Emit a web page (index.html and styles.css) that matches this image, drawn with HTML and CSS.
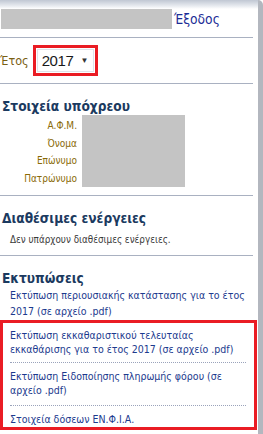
FILE: index.html
```html
<!DOCTYPE html>
<html lang="el">
<head>
    <meta charset="UTF-8">
    <meta name="viewport" content="width=device-width, initial-scale=1.0">
    <title>Στοιχεία υπόχρεου</title>
    <link rel="stylesheet" href="styles.css">
</head>
<body>
    <div class="panel">
        <div class="topbar">
            <div class="user-mask"></div>
            <a href="#" class="logout">Έξοδος</a>
        </div>
        <hr class="sep">
        <div class="year-row">
            <span class="year-label">Έτος</span>
            <div class="highlight year-box">
                <div class="select">2017<span class="arrow">&#9660;</span></div>
            </div>
        </div>
        <hr class="sep">

        <h2>Στοιχεία υπόχρεου</h2>
        <div class="owner">
            <div class="owner-labels">
                <div>Α.Φ.Μ.</div>
                <div>Όνομα</div>
                <div>Επώνυμο</div>
                <div>Πατρώνυμο</div>
            </div>
            <div class="owner-mask"></div>
        </div>
        <hr class="sep">

        <h2>Διαθέσιμες ενέργειες</h2>
        <p class="note">Δεν υπάρχουν διαθέσιμες ενέργειες.</p>
        <hr class="sep">

        <h2>Εκτυπώσεις</h2>
        <a href="#" class="print-link">Εκτύπωση περιουσιακής κατάστασης για το έτος 2017 (σε αρχείο .pdf)</a>
        <div class="highlight prints">
            <a href="#" class="print-link">Εκτύπωση εκκαθαριστικού τελευταίας εκκαθάρισης για το έτος 2017 (σε αρχείο .pdf)</a>
            <a href="#" class="print-link">Εκτύπωση Ειδοποίησης πληρωμής φόρου (σε αρχείο .pdf)</a>
            <a href="#" class="print-link">Στοιχεία δόσεων ΕΝ.Φ.Ι.Α.</a>
        </div>
    </div>
</body>
</html>
```

FILE: styles.css
```css
html, body {
    margin: 0;
    height: 100%;
    overflow: hidden;
}
body {
    font-family: "DejaVu Sans Condensed", "DejaVu Sans", sans-serif;
    background: #fff;
}
.panel {
    height: 100%;
    box-sizing: border-box;
    border-right: 5px solid #b3b7bf;
    border-top-right-radius: 5px;
    background: linear-gradient(to bottom, #c0c7d3 0px, #e8ebf0 6px, #fff 9px);
    padding-top: 9px;
}
.topbar {
    display: flex;
    align-items: center;
    height: 20px;
}
.user-mask {
    width: 171px;
    height: 20px;
    margin-left: 1px;
    background: #c4c4c4;
}
.logout {
    margin-left: 2px;
    font-size: 13.7px;
    color: #1c2c96;
    text-decoration: none;
}
.sep {
    margin: 0 5px 0 0;
    border: 0;
    border-top: 1px solid #a9b1c1;
}
.topbar + .sep {
    margin-top: 8px;
}
.year-row {
    display: flex;
    align-items: center;
    padding: 7px 0 7px;
}
.year-label {
    font-size: 12.5px;
    color: #7a6012;
}
.highlight {
    border: 3px solid #ea1c24;
}
.year-box {
    margin-left: 4px;
    padding: 1px;
}
.select {
    display: flex;
    align-items: center;
    height: 21px;
    padding: 0 5px 0 4px;
    border: 1px solid #dfe3ea;
    font-family: "Liberation Sans", Arial, sans-serif;
    font-size: 15px;
    letter-spacing: -0.4px;
    color: #1a1a1a;
}
.arrow {
    font-size: 8px;
    margin-left: 7px;
    color: #333;
}
h2 {
    margin: 14px 0 0 2px;
    font-size: 13.6px;
    font-weight: bold;
    color: #1b3a60;
    line-height: 17px;
}
.owner {
    display: flex;
    gap: 5px;
    padding-bottom: 7px;
}
.owner-labels {
    width: 77px;
    text-align: right;
    font-size: 10px;
    color: #8a6a06;
    line-height: 17.7px;
    padding-top: 2px;
}
.owner-mask {
    width: 103px;
    height: 72px;
    background: #c4c4c4;
}
.note {
    margin: 7px 0 9px 10px;
    font-size: 9.8px;
    line-height: 12px;
    color: #3a3a3a;
}
.print-link {
    display: block;
    margin: 0 8px 0 10px;
    font-size: 10.5px;
    line-height: 16px;
    color: #1c3a8e;
    text-decoration: none;
}
h2 + .print-link {
    margin-bottom: 1px;
}
.prints {
    height: 110px;
    box-sizing: border-box;
    margin-right: 1px;
    padding-top: 1px;
}
.prints .print-link {
    margin-left: 7px;
    line-height: 14.5px;
    padding: 4px 0 5px;
    border-bottom: 1px dotted #9aa3bb;
}
.prints .print-link + .print-link {
    padding-top: 6px;
    padding-bottom: 7px;
}
.prints .print-link:last-child {
    border-bottom: 0;
}
```
